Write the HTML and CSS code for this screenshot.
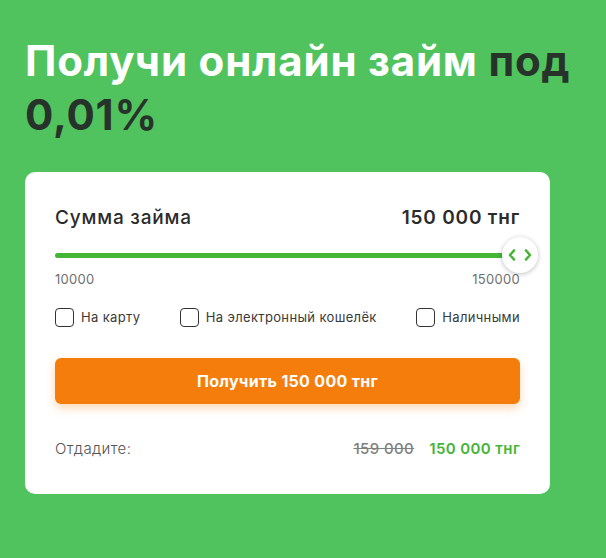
FILE: index.html
```html
<!DOCTYPE html>
<html lang="ru">
<head>
<meta charset="utf-8">
<link rel="stylesheet" href="styles.css">
</head>
<body>
<div class="page">
  <h1 class="title">Получи онлайн займ <span class="dark">под 0,01%</span></h1>
  <div class="card">
    <div class="row head">
      <span class="label">Сумма займа</span>
      <span class="amount">150 000 тнг</span>
    </div>
    <div class="slider">
      <div class="track"></div>
      <div class="thumb">
        <svg width="26" height="14" viewBox="0 0 26 14"><path d="M7 2.5 L3 7 L7 11.5" fill="none" stroke="#45b536" stroke-width="2.6" stroke-linecap="round" stroke-linejoin="round"/><path d="M19 2.5 L23 7 L19 11.5" fill="none" stroke="#45b536" stroke-width="2.6" stroke-linecap="round" stroke-linejoin="round"/></svg>
      </div>
    </div>
    <div class="row limits">
      <span>10000</span>
      <span>150000</span>
    </div>
    <div class="row options">
      <label class="opt"><span class="box"></span>На карту</label>
      <label class="opt"><span class="box"></span>На электронный кошелёк</label>
      <label class="opt"><span class="box"></span>Наличными</label>
    </div>
    <button class="btn">Получить 150 000 тнг</button>
    <div class="row total">
      <span class="give">Отдадите:</span>
      <span class="sums"><s class="old">159 000</s><span class="new">150 000 тнг</span></span>
    </div>
  </div>
</div>
</body>
</html>
```
FILE: styles.css
```css
html, body {
  margin: 0;
  padding: 0;
  background: #50c35e;
}
body {
  font-family: "Inter", "Open Sans", "Liberation Sans", sans-serif;
  width: 606px;
  height: 558px;
  overflow: hidden;
}
.page {
  padding: 34px 0 0 25px;
}
.title {
  margin: 0;
  width: 570px;
  font-size: 42px;
  line-height: 54px;
  font-weight: 700;
  color: #ffffff;
  letter-spacing: 0.8px;
}
.dark {
  color: #27332a;
}
.card {
  margin-top: 30px;
  width: 525px;
  box-sizing: border-box;
  background: #ffffff;
  border-radius: 10px;
  padding: 34px 30px 35px 30px;
}
.row {
  display: flex;
  justify-content: space-between;
  align-items: center;
}
.head {
  width: 465px;
  font-size: 19px;
  font-weight: 500;
  color: #2b2b2b;
  line-height: 24px;
  letter-spacing: 0.8px;
}
.amount {
  font-weight: 600;
}
.slider {
  position: relative;
  margin-top: 23px;
  height: 6px;
  width: 465px;
}
.track {
  height: 5px;
  border-radius: 3px;
  background: #45b536;
  width: 460px;
}
.thumb {
  position: absolute;
  left: 447px;
  top: -16px;
  width: 36px;
  height: 36px;
  border-radius: 50%;
  background: #ffffff;
  box-shadow: 0 1px 5px rgba(0,0,0,0.25);
  display: flex;
  align-items: center;
  justify-content: center;
}
.limits {
  width: 465px;
  margin-top: 12px;
  font-size: 13px;
  color: #6f6f6f;
  line-height: 16px;
  letter-spacing: 0.3px;
}
.options {
  width: 465px;
  margin-top: 20px;
  font-size: 13px;
  color: #3a3a3a;
  line-height: 20px;
  letter-spacing: 0.35px;
}
.opt {
  display: flex;
  align-items: center;
  gap: 7px;
}
.box {
  width: 19px;
  height: 19px;
  box-sizing: border-box;
  border: 1.5px solid #333;
  border-radius: 4px;
  display: inline-block;
}
.btn {
  display: block;
  margin-top: 31px;
  width: 465px;
  height: 46px;
  border: none;
  border-radius: 6px;
  background: #f57d0b;
  color: #ffffff;
  font-family: inherit;
  font-size: 16px;
  font-weight: 700;
  letter-spacing: 0.3px;
  box-shadow: 0 4px 10px rgba(245,125,11,0.3);
}
.total {
  width: 465px;
  margin-top: 35px;
  font-size: 15px;
  line-height: 20px;
  letter-spacing: 0.4px;
}
.give {
  color: #555;
  font-weight: 300;
}
.old {
  color: #808080;
  font-weight: 500;
  margin-right: 15px;
}
.new {
  color: #45b536;
  font-weight: 600;
}
```
